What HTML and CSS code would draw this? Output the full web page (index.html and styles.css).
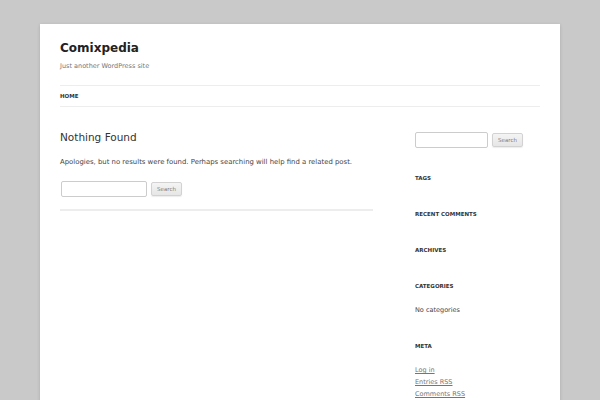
FILE: index.html
```html
<!DOCTYPE html>
<html lang="en">
<head>
<meta charset="utf-8">
<title>Comixpedia | Just another WordPress site</title>
<link rel="stylesheet" href="styles.css">
</head>
<body>
<div class="site">
  <header class="site-header">
    <h1 class="site-title">Comixpedia</h1>
    <h2 class="site-description">Just another WordPress site</h2>
    <nav class="main-navigation">
      <ul class="nav-menu">
        <li class="current"><a href="#">Home</a></li>
      </ul>
    </nav>
  </header>
  <div class="site-main">
    <main class="site-content">
      <article class="no-results">
        <h1 class="entry-title">Nothing Found</h1>
        <p class="entry-text">Apologies, but no results were found. Perhaps searching will help find a related post.</p>
        <form class="search-form main-search">
          <input type="text" class="search-input">
          <button type="button" class="search-button">Search</button>
        </form>
      </article>
    </main>
    <aside class="widget-area">
      <section class="widget">
        <form class="search-form side-search">
          <input type="text" class="search-input">
          <button type="button" class="search-button">Search</button>
        </form>
      </section>
      <section class="widget">
        <h3 class="widget-title">Tags</h3>
      </section>
      <section class="widget">
        <h3 class="widget-title">Recent Comments</h3>
      </section>
      <section class="widget">
        <h3 class="widget-title">Archives</h3>
      </section>
      <section class="widget">
        <h3 class="widget-title">Categories</h3>
        <ul class="widget-list">
          <li>No categories</li>
        </ul>
      </section>
      <section class="widget">
        <h3 class="widget-title">Meta</h3>
        <ul class="widget-list">
          <li><a href="#">Log in</a></li>
          <li><a href="#">Entries RSS</a></li>
          <li><a href="#">Comments RSS</a></li>
        </ul>
      </section>
    </aside>
  </div>
</div>
</body>
</html>
```

FILE: styles.css
```css
html, body {
  margin: 0;
  padding: 0;
}
body {
  background: #c9c9c9;
  font-family: "DejaVu Sans", "Liberation Sans", sans-serif;
  color: #444;
}
.site {
  width: 480px;
  margin: 24px auto 0;
  padding: 0 20px 40px;
  background: #fff;
  box-shadow: 0 1px 3px rgba(100, 100, 100, 0.3);
}
.site-header {
  padding-top: 12px;
}
.site-title {
  margin: 0;
  font-size: 12px;
  line-height: 24px;
  font-weight: bold;
  color: #222;
}
.site-description {
  margin: 0;
  font-size: 6.5px;
  line-height: 12px;
  font-weight: normal;
  color: #757575;
}
.main-navigation {
  margin-top: 13px;
}
.nav-menu {
  list-style: none;
  margin: 0;
  padding: 0;
  border-top: 1px solid #ededed;
  border-bottom: 1px solid #ededed;
}
.nav-menu a {
  display: block;
  font-size: 5.5px;
  line-height: 20px;
  font-weight: bold;
  text-transform: uppercase;
  color: #333;
  text-decoration: none;
}
.site-main {
  display: flex;
  justify-content: space-between;
  align-items: flex-start;
  margin-top: 24px;
}
.site-content {
  width: 312.5px;
}
.no-results {
  padding-bottom: 12px;
  border-bottom: 2px solid #ededed;
}
.entry-title {
  margin: 0 0 13px;
  font-size: 10.5px;
  line-height: 12px;
  font-weight: normal;
  color: #333;
}
.entry-text {
  margin: 0 0 12px;
  font-size: 6.9px;
  line-height: 12px;
  color: #444;
}
.search-form {
  display: flex;
  align-items: center;
  gap: 4px;
}
.main-search {
  padding-top: 1px;
  padding-left: 1px;
}
.side-search {
  padding-top: 1px;
}
.search-input {
  box-sizing: border-box;
  height: 16px;
  margin: 0;
  padding: 3px;
  border: 1px solid #ccc;
  border-radius: 2px;
  background: #fff;
  font-family: inherit;
  font-size: 6px;
}
.main-search .search-input {
  width: 86px;
}
.side-search .search-input {
  width: 73px;
}
.search-button {
  box-sizing: border-box;
  height: 14px;
  width: 31px;
  margin: 0;
  padding: 0;
  border: 1px solid #d2d2d2;
  border-radius: 2px;
  background: linear-gradient(#f4f4f4, #e6e6e6);
  box-shadow: 0 1px 1px rgba(64, 64, 64, 0.1);
  font-family: inherit;
  font-size: 5.5px;
  color: #7c7c7c;
}
.widget-area {
  width: 125px;
}
.widget {
  margin-bottom: 24px;
}
.widget-title {
  margin: 0 0 12px;
  font-size: 5.5px;
  line-height: 12px;
  font-weight: bold;
  text-transform: uppercase;
  color: #333;
}
.widget-list {
  list-style: none;
  margin: 0;
  padding: 0;
  font-size: 6.5px;
  line-height: 12px;
  color: #444;
}
.widget-list a {
  color: #757575;
  text-decoration: underline;
}
```
